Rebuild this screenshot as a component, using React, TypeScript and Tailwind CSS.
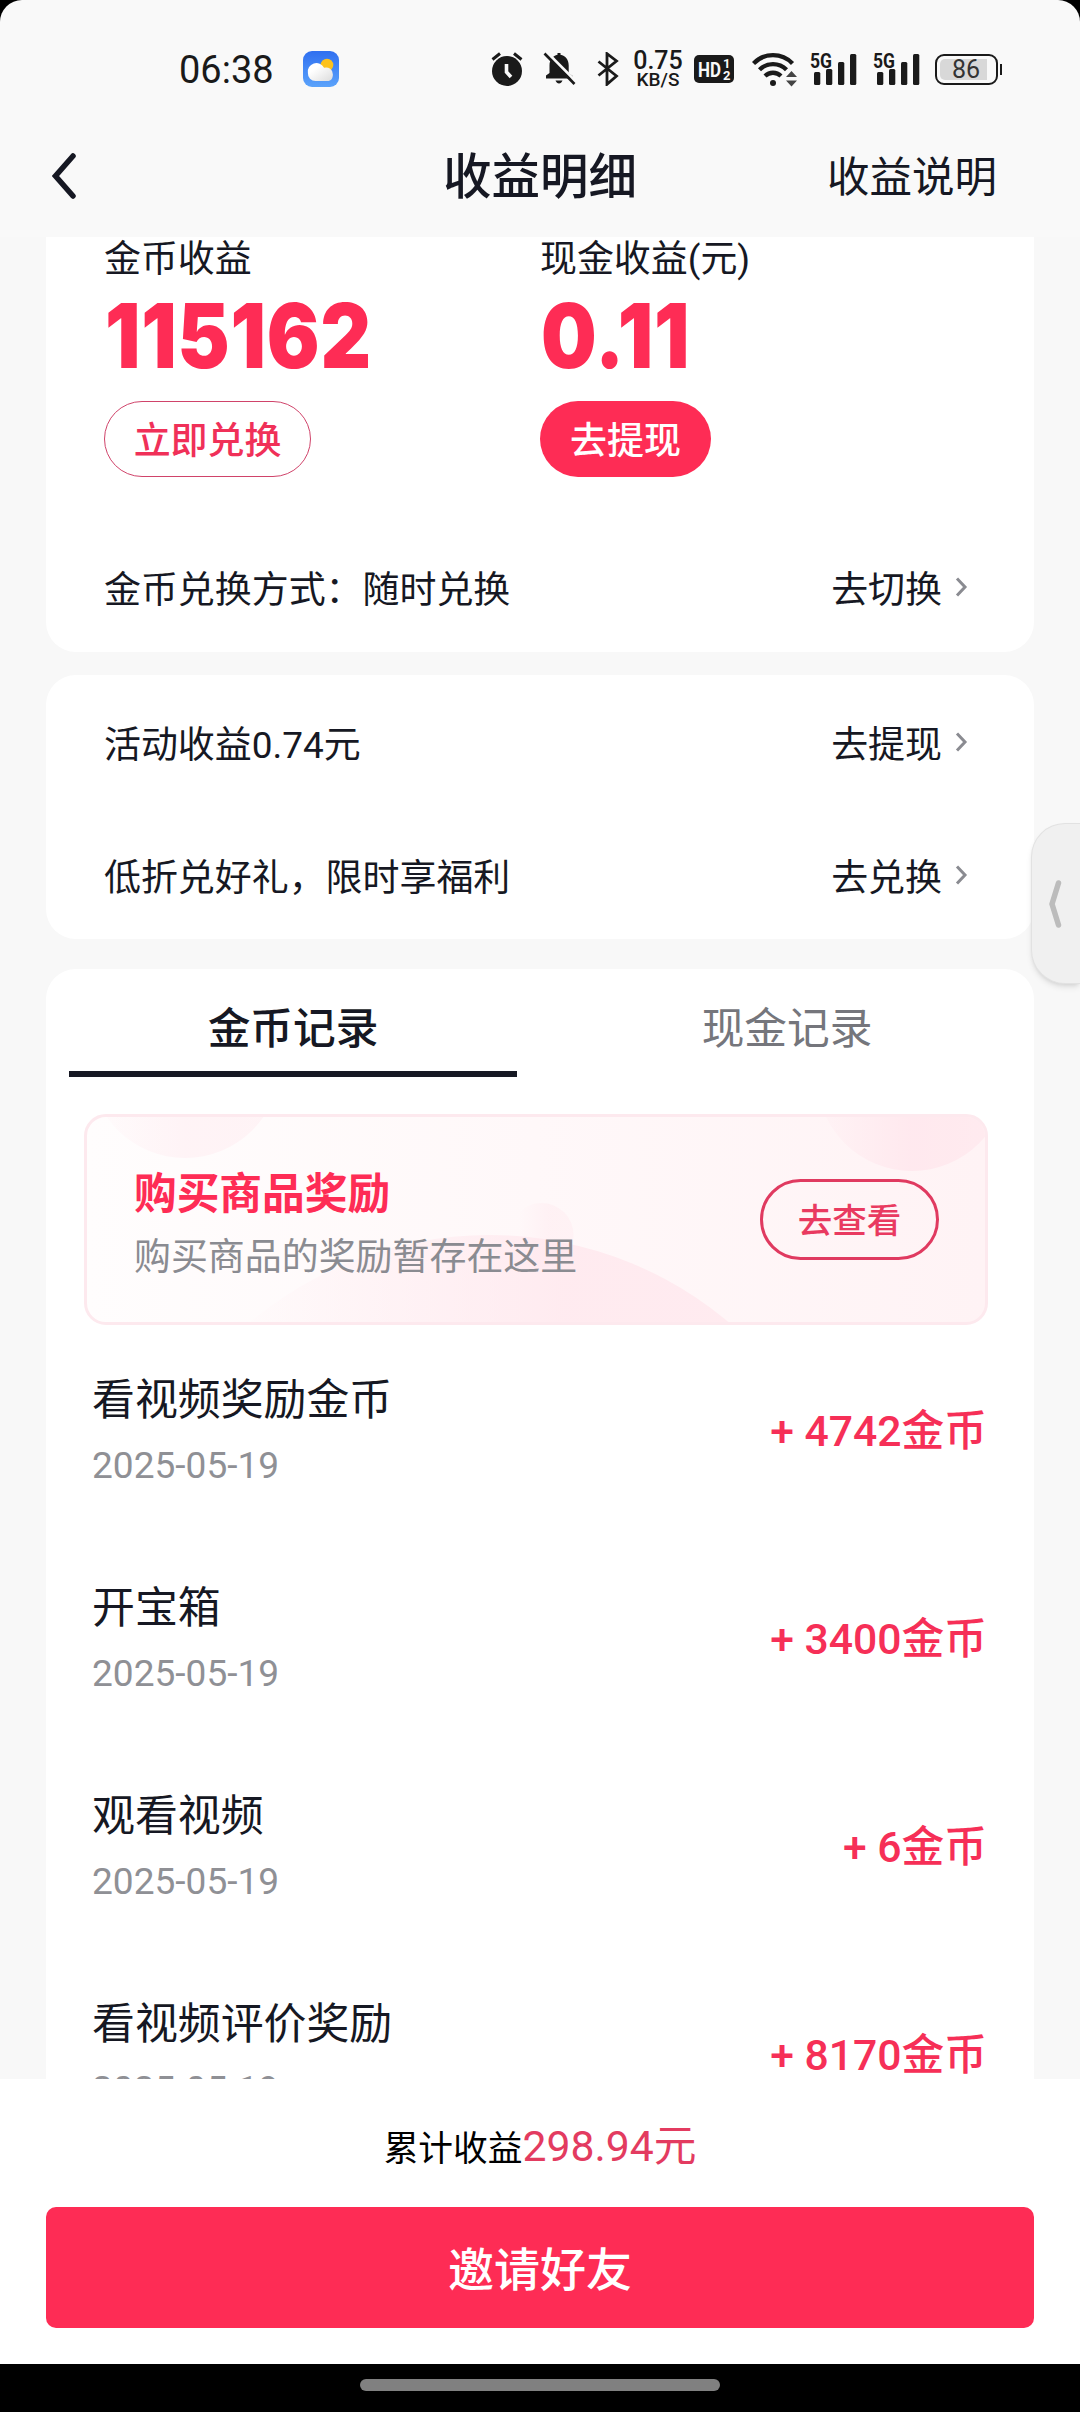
import { ReactNode } from "react";

const RECORDS = [
  { title: "看视频奖励金币", date: "2025-05-19", amount: "+ 4742金币" },
  { title: "开宝箱", date: "2025-05-19", amount: "+ 3400金币" },
  { title: "观看视频", date: "2025-05-19", amount: "+ 6金币" },
  { title: "看视频评价奖励", date: "2025-05-19", amount: "+ 8170金币" },
];

function WeatherIcon() {
  return (
    <svg className="ml-[29px] size-9" viewBox="0 0 36 36">
      <defs>
        <linearGradient id="sky" x1="0" y1="0" x2="0" y2="1">
          <stop offset="0" stopColor="#2f6ff0" />
          <stop offset="1" stopColor="#5ba3fb" />
        </linearGradient>
        <linearGradient id="cloud" x1="0" y1="0" x2="1" y2="1">
          <stop offset="0.3" stopColor="#fff" />
          <stop offset="1" stopColor="#dcdcdc" />
        </linearGradient>
      </defs>
      <rect width="36" height="36" rx="9" fill="url(#sky)" />
      <circle cx="24" cy="14" r="6.3" fill="#fdc21c" />
      <path d="M12.500 30a7.600 7.600 0 0 1-7.600-8 8.600 8.600 0 0 1 16.200-5.200 6.800 6.800 0 0 1 8.800 6.600c0 3.700-1.700 6.600-5.400 6.600z" fill="url(#cloud)" />
    </svg>
  );
}

function AlarmIcon() {
  return (
    <svg className="h-[34px] w-8" viewBox="0 0 32 34" fill="none">
      <path d="M1.500 7.500 9 1.500M30.500 7.500 23 1.500" stroke="#1a1a1a" strokeWidth="3" />
      <circle cx="16" cy="19" r="15" fill="#1a1a1a" />
      <path d="M15.500 12v8l4.500 5" stroke="#f9f9f9" strokeWidth="3.600" />
    </svg>
  );
}

function BellOffIcon() {
  return (
    <svg className="ml-5 h-[34px] w-[34px]" viewBox="0 0 34 34" fill="none">
      <path d="M3 26.500v-3l3.500-2.500v-7.500C6.500 7.500 10 3.800 14.500 2.800V1h3v1.800c5 1 8.200 4.700 8.200 10.700v7.500l4 3v2.500z" fill="#1a1a1a" />
      <path d="M12.500 28.500h7c-.8 2-2 3-3.500 3s-2.700-1-3.500-3z" fill="#1a1a1a" />
      <path d="M3.500 0 34 30.500" stroke="#f9f9f9" strokeWidth="3" />
      <path d="M1.500 1.500 31.500 32" stroke="#1a1a1a" strokeWidth="2.600" />
    </svg>
  );
}

function BluetoothIcon() {
  return (
    <svg className="ml-5 h-[34px] w-[22px]" viewBox="0 0 22 34" fill="none">
      <path d="M1.500 9.500 19.500 24l-9.500 8.300V1.700L19.500 9 1.500 23.500" stroke="#1a1a1a" strokeWidth="2.800" />
    </svg>
  );
}

function WifiIcon() {
  return (
    <svg className="ml-[18px] h-[35px] w-[46px]" viewBox="0 0 46 35" fill="none" stroke="#1a1a1a">
      <path d="M1.500 11.500a27 27 0 0 1 39 0" strokeWidth="4.300" />
      <path d="M7.500 17.800a19 19 0 0 1 27 0" strokeWidth="4.300" />
      <path d="M13 24a11.500 11.500 0 0 1 16 0" strokeWidth="4.300" />
      <circle cx="21" cy="31" r="3" fill="#1a1a1a" stroke="none" />
      <path d="m39.500 19 5.500 6H34zM39.500 34.500 34 28.500h11z" fill="#444" stroke="none" />
    </svg>
  );
}

function SignalIcon() {
  return (
    <svg className="h-[34px] w-[47px] overflow-visible" viewBox="0 0 47 34" fill="#1a1a1a">
      <text x="0" y="15.500" fontFamily="Roboto" fontWeight="700" fontSize="21" textLength="22" lengthAdjust="spacingAndGlyphs">
        5G
      </text>
      <rect x="4" y="20" width="6.300" height="13" rx="1.500" />
      <rect x="16" y="17" width="6.300" height="16" rx="1.500" />
      <rect x="28" y="10" width="6.300" height="23" rx="1.500" />
      <rect x="40" y="2" width="6.300" height="31" rx="1.500" />
    </svg>
  );
}

function StatusBar() {
  return (
    <div className="flex h-[138px] shrink-0 items-center pl-[179px] text-[#1a1a1a]">
      <span className="w-[95px] pt-[2px] text-[38px]">06:38</span>
      <WeatherIcon />
      <div className="ml-[152px] flex items-center">
        <AlarmIcon />
        <BellOffIcon />
        <BluetoothIcon />
        <div className="ml-[15px] flex w-[48px] flex-col items-center pt-[2px]">
          <span className="text-[25px] leading-[20px] font-medium">0.75</span>
          <span className="text-[19px] leading-[18px] font-medium">KB/S</span>
        </div>
        <svg className="ml-3 h-7 w-10" viewBox="0 0 40 28" fill="#f9f9f9" fontFamily="Roboto" fontWeight="700">
          <rect width="40" height="28" rx="5" fill="#1a1a1a" />
          <text x="4" y="21.500" fontSize="21" textLength="23" lengthAdjust="spacingAndGlyphs">
            HD
          </text>
          <text x="29" y="13" fontSize="13">
            1
          </text>
          <text x="29" y="24.500" fontSize="13">
            2
          </text>
        </svg>
        <WifiIcon />
        <div className="ml-3 flex gap-4">
          <SignalIcon />
          <SignalIcon />
        </div>
        <div className="ml-[15px] flex items-center">
          <div className="flex h-[31px] w-[63px] rounded-[9px] border-2 border-[#1a1a1a] p-[3px]">
            <div className="flex h-full w-[47px] items-center rounded-l-[5px] bg-[#d8d8d8] pl-[12px] text-[25px] leading-none text-[#333]">86</div>
          </div>
          <div className="ml-[2px] h-[11px] w-[2px] bg-[#1a1a1a]" />
        </div>
      </div>
    </div>
  );
}

function Header() {
  return (
    <header className="flex h-[99px] shrink-0 items-start justify-between pl-[52px] pr-[83px]">
      <div className="flex h-[76px] w-[170px] items-center">
        <svg className="h-[46px] w-6" viewBox="0 0 24 46" fill="none">
          <path d="M21 3 3.500 23 21 43" stroke="#161823" strokeWidth="5.500" strokeLinecap="round" />
        </svg>
      </div>
      <h1 className="ml-[31px] text-[48.500px] leading-[79px] font-medium">收益明细</h1>
      <button className="text-[42.500px] leading-[79px]">收益说明</button>
    </header>
  );
}

function LinkRow({ label, action }: { label: string; action: string }) {
  return (
    <div className="flex h-[133px] shrink-0 items-center justify-between pr-[66px] pl-[58px]">
      <span>{label}</span>
      <span className="flex items-center">
        {action}
        <svg className="mb-[7px] ml-3 h-5 w-[14px]" viewBox="0 0 14 20" fill="none">
          <path d="m3 1.500 8 8.500-8 8.500" stroke="#8a8b91" strokeWidth="3" />
        </svg>
      </span>
    </div>
  );
}

function Income({ label, value, children }: { label: string; value: string; children: ReactNode }) {
  return (
    <div className="flex w-[436px] flex-col items-start">
      <span className="leading-[45px]">{label}</span>
      <span className="mt-[9px] h-[88px] origin-left scale-x-[0.88] pl-px font-[Inter] text-[89px] leading-[89px] font-black tracking-[1px] text-[#fe2c55]">
        {value}
      </span>
      {children}
    </div>
  );
}

function Promo() {
  return (
    <div className="relative mt-[24px] mr-[46px] ml-[38px] flex h-[211px] items-center justify-between overflow-hidden rounded-[22px] border-3 border-[#fde9ee] bg-linear-to-r from-[#fffdfd] to-[#fff3f5] pr-[46px] pl-[47px]">
      <svg className="absolute inset-0 h-full w-full" viewBox="0 0 897 205" preserveAspectRatio="none">
        <defs>
          <linearGradient id="blob" x1="0" y1="0" x2="1" y2="0">
            <stop offset="0.15" stopColor="#ffe4eb" stopOpacity="0" />
            <stop offset="0.6" stopColor="#ffe4eb" stopOpacity="0.65" />
            <stop offset="1" stopColor="#ffe9ee" stopOpacity="0.8" />
          </linearGradient>
          <linearGradient id="corner" x1="0" y1="0" x2="1" y2="0">
            <stop offset="0" stopColor="#ffe4eb" stopOpacity="0.1" />
            <stop offset="0.5" stopColor="#ffe4eb" stopOpacity="0.7" />
            <stop offset="1" stopColor="#ffe9ee" stopOpacity="0.8" />
          </linearGradient>
        </defs>
        <circle cx="98" cy="-54" r="95" fill="url(#corner)" opacity="0.5" />
        <circle cx="824" cy="-41" r="95" fill="url(#corner)" />
        <circle cx="454" cy="118" r="32" fill="url(#blob)" opacity="0.5" />
        <circle cx="402" cy="489" r="371" fill="url(#blob)" />
      </svg>
      <div className="relative pt-[13px]">
        <div className="text-[42.700px] leading-[64px] font-bold text-[#fe2c55]">购买商品奖励</div>
        <div className="leading-[64px] text-[#8a8b91]">购买商品的奖励暂存在这里</div>
      </div>
      <button className="relative h-[81px] w-[179px] rounded-full border-3 border-[#e03a60] pt-[3px] text-[34.500px] leading-none font-medium text-[#e93a60]">
        去查看
      </button>
    </div>
  );
}

export default function App() {
  return (
    <div className="h-[2412px] w-[1080px] overflow-hidden bg-black font-['Roboto','Noto_Sans_CJK_SC',sans-serif] text-[36.950px] text-[#161823]">
      <div className="relative flex h-[2364px] flex-col rounded-t-[22px] bg-[#f9f9f9]">
        <StatusBar />
        <Header />

        <main className="flex-1 overflow-hidden bg-[#f8f8f8] px-[46px]">
          <section className="h-[415px] rounded-b-[30px] bg-white">
            <div className="flex pl-[58px]">
              <Income label="金币收益" value="115162">
                <button className="mt-[22px] h-[76px] w-[207px] rounded-full border-[1.500px] border-[#d0436a] pt-[6px] leading-none font-medium text-[#f03058]">立即兑换</button>
              </Income>
              <Income label="现金收益(元)" value="0.11">
                <button className="mt-[22px] h-[76px] w-[171px] rounded-full bg-[#fe2c55] pt-[6px] leading-none font-medium text-white">去提现</button>
              </Income>
            </div>
            <div className="mt-[47px]">
              <LinkRow label="金币兑换方式：随时兑换" action="去切换" />
            </div>
          </section>

          <section className="mt-[23px] flex h-[264px] flex-col rounded-[30px] bg-white pt-1">
            <LinkRow label="活动收益0.74元" action="去提现" />
            <LinkRow label="低折兑好礼，限时享福利" action="去兑换" />
          </section>

          <section className="mt-[30px] rounded-t-[30px] bg-white pb-10">
            <div className="flex text-center text-[42.700px]">
              <div className="w-1/2 px-[23px]">
                <div className="h-[108px] border-b-6 border-[#161823] leading-[121px] font-medium">金币记录</div>
              </div>
              <div className="w-1/2 leading-[121px] text-[#75767c]">现金记录</div>
            </div>
            <Promo />
            <ul className="mt-[35px]">
              {RECORDS.map(({ title, date, amount }) => (
                <li key={title} className="flex h-[208px] justify-between pr-[47px] pl-[46px]">
                  <div>
                    <div className="text-[42.900px] leading-[80px]">{title}</div>
                    <div className="text-[37.100px] leading-[51px] text-[#8f9095]">{date}</div>
                  </div>
                  <span className="text-[42.700px] leading-[143px] font-medium text-[#f62f57]">{amount}</span>
                </li>
              ))}
            </ul>
          </section>
        </main>

        <footer className="flex h-[285px] shrink-0 flex-col items-center bg-white px-[46px]">
          <div className="h-[128px] leading-[134px]">
            <span className="text-[34.700px] text-black">累计收益</span>
            <span className="text-[42.700px] text-[#e33b60]">298.94元</span>
          </div>
          <button className="h-[121px] w-full rounded-[10px] bg-[#fe2c55] pt-[5px] text-[46px] font-medium text-white">邀请好友</button>
        </footer>

        {/* Edge panel handle */}
        <div className="absolute top-[823px] right-0 flex h-[161px] w-[49px] items-center rounded-l-[34px] border border-r-0 border-[#e2e2e2] bg-[#f0f0f0] pl-[16px] shadow-md">
          <svg className="h-12 w-[14px]" viewBox="0 0 14 48" fill="none">
            <path d="M10.500 3 4 24l6.500 21" stroke="#bcbcbc" strokeWidth="5.500" strokeLinecap="round" strokeLinejoin="round" />
          </svg>
        </div>
      </div>

      {/* Gesture bar */}
      <div className="flex h-12 justify-center pt-[15px]">
        <div className="h-3 w-[360px] rounded-full bg-[#808080]" />
      </div>
    </div>
  );
}
